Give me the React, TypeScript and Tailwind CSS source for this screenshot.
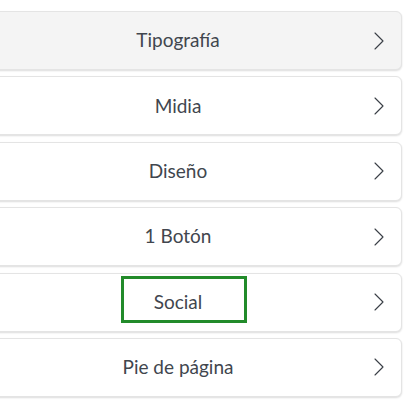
const items = ["Tipografía", "Midia", "Diseño", "1 Botón", "Social", "Pie de página"];

function Chevron() {
  return (
    <svg width="12" height="18" viewBox="0 0 12 18" fill="none" className="shrink-0">
      <path d="M2 1 L10 9 L2 17" stroke="#3a3f46" strokeWidth="1.1" strokeLinecap="round" strokeLinejoin="round" />
    </svg>
  );
}

export default function App() {
  return (
    <div className="w-[411px] h-[415px] bg-white overflow-hidden" style={{ fontFamily: "Lato, 'Noto Sans', sans-serif" }}>
      <div className="flex flex-col gap-[6.4px] pt-[11px] ml-[-10px] w-[412px]">
        {items.map((label, i) => (
          <div
            key={label}
            className={`relative flex items-center h-[59px] rounded-[6px] border border-[#e4e4e4] shadow-[0_1px_2px_rgba(0,0,0,0.14)] pr-[12px] ${
              i === 0 ? "bg-[#f4f4f4]" : "bg-white"
            }`}
          >
            <div className="flex-1 text-center text-[19px] text-[#41464e] pr-[4px]">{label}</div>
            <div className="w-[20px] flex justify-center">
              <Chevron />
            </div>
            {label === "Social" && (
              <div className="absolute left-[130px] top-[2px] w-[126px] h-[47px] border-[3px] border-[#228b2a]" />
            )}
          </div>
        ))}
      </div>
    </div>
  );
}
